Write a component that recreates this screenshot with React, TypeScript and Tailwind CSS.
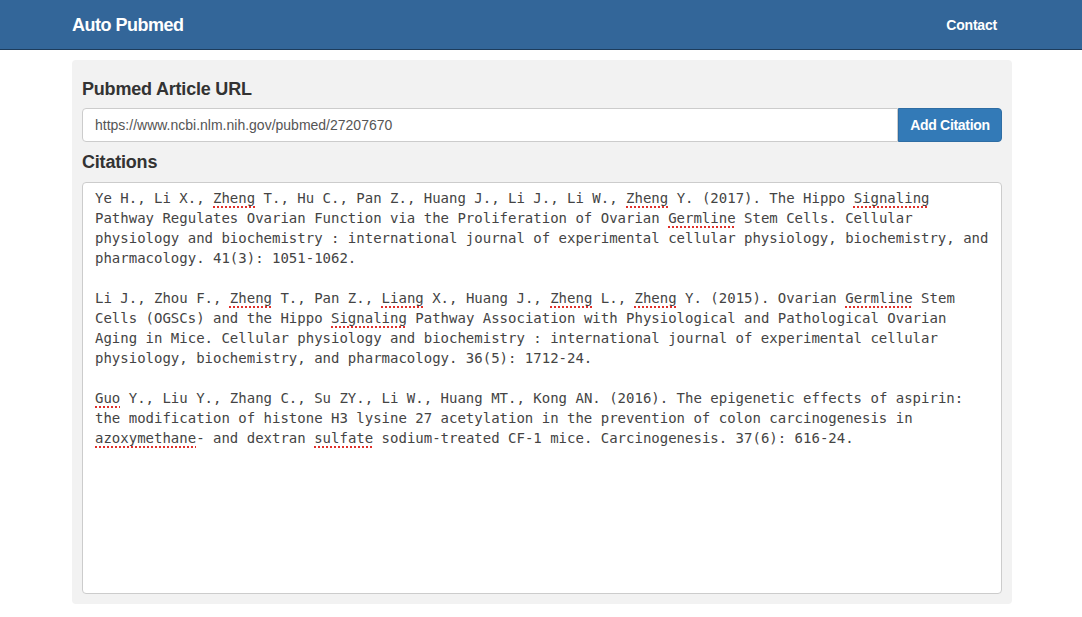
import React from "react";

const SP = ({ children }: { children: React.ReactNode }) => (
  <span className="underline decoration-dotted decoration-[#e0302a] decoration-[2px] underline-offset-[3px]">
    {children}
  </span>
);

export default function App() {
  const sans = { fontFamily: '"Liberation Sans", Arial, sans-serif' };
  return (
    <div className="min-h-[617px] bg-white" style={sans}>
      <nav className="h-[50px] bg-[#336699] border-b border-[#1d3c5c] flex items-center justify-between pl-[72px] pr-[85px]">
        <span className="text-white text-[18px] font-bold tracking-[-0.5px] leading-[20px]">Auto Pubmed</span>
        <span className="text-white text-[14px] font-bold tracking-[-0.2px] leading-[20px]">Contact</span>
      </nav>
      <div className="w-[940px] ml-[72px] mt-[10px] bg-[#f2f2f2] rounded-[4px] px-[10px] pt-[19px] pb-[10px]">
        <h4 className="text-[18px] leading-[20px] font-bold text-[#333] tracking-[-0.2px]">Pubmed Article URL</h4>
        <div className="flex mt-[9px] h-[34px]">
          <div className="flex-1 bg-white border border-[#ccc] rounded-l-[4px] pl-[12px] flex items-center text-[14px] text-[#555]">
            https://www.ncbi.nlm.nih.gov/pubmed/27207670
          </div>
          <button className="w-[104px] bg-[#337ab7] border border-[#2e6da4] rounded-r-[4px] text-white text-[14px] font-bold tracking-[-0.3px]">
            Add Citation
          </button>
        </div>
        <h4 className="mt-[10px] text-[18px] leading-[20px] font-bold text-[#333] tracking-[-0.2px]">Citations</h4>
        <div
          className="mt-[10px] h-[412px] bg-white border border-[#ccc] rounded-[4px] pl-[12px] pt-[5px] text-[14px] leading-[20px] text-[#444] whitespace-pre"
          style={{ fontFamily: '"DejaVu Sans Mono", Menlo, monospace' }}
        >
          <div>Ye H., Li X., <SP>Zheng</SP> T., Hu C., Pan Z., Huang J., Li J., Li W., <SP>Zheng</SP> Y. (2017). The Hippo <SP>Signaling</SP></div>
          <div>Pathway Regulates Ovarian Function via the Proliferation of Ovarian <SP>Germline</SP> Stem Cells. Cellular</div>
          <div>physiology and biochemistry : international journal of experimental cellular physiology, biochemistry, and</div>
          <div>pharmacology. 41(3): 1051-1062.</div>
          <div>&nbsp;</div>
          <div>Li J., Zhou F., <SP>Zheng</SP> T., Pan Z., <SP>Liang</SP> X., Huang J., <SP>Zheng</SP> L., <SP>Zheng</SP> Y. (2015). Ovarian <SP>Germline</SP> Stem</div>
          <div>Cells (OGSCs) and the Hippo <SP>Signaling</SP> Pathway Association with Physiological and Pathological Ovarian</div>
          <div>Aging in Mice. Cellular physiology and biochemistry : international journal of experimental cellular</div>
          <div>physiology, biochemistry, and pharmacology. 36(5): 1712-24.</div>
          <div>&nbsp;</div>
          <div><SP>Guo</SP> Y., Liu Y., Zhang C., Su ZY., Li W., Huang MT., Kong AN. (2016). The epigenetic effects of aspirin:</div>
          <div>the modification of histone H3 lysine 27 acetylation in the prevention of colon carcinogenesis in</div>
          <div><SP>azoxymethane</SP>- and dextran <SP>sulfate</SP> sodium-treated CF-1 mice. Carcinogenesis. 37(6): 616-24.</div>
        </div>
      </div>
    </div>
  );
}
